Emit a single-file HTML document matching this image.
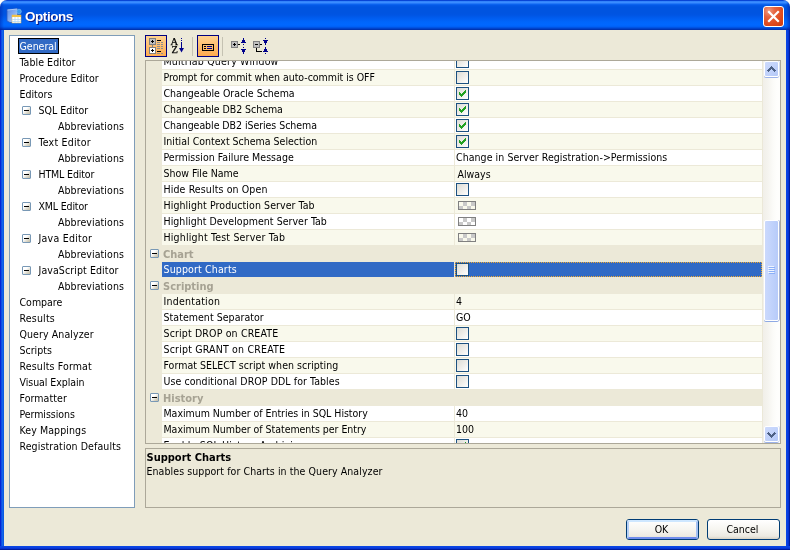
<!DOCTYPE html>
<html>
<head>
<meta charset="utf-8">
<title>Options</title>
<style>
html,body{margin:0;padding:0;background:#fff;}
body{width:790px;height:550px;overflow:hidden;position:relative;
 font-family:"DejaVu Sans Condensed","Liberation Sans",sans-serif;font-size:10.5px;color:#000;}
*{box-sizing:border-box;}
.abs{position:absolute;}
#win{will-change:transform;position:absolute;left:0;top:0;width:790px;height:550px;background:#ece9d8;
 border-radius:7px 7px 0 0;overflow:hidden;}
#title{position:absolute;left:0;top:0;width:790px;height:30px;
 background:linear-gradient(to bottom,#0845d6 0px,#0845d6 1px,#2f7ff8 1px,#3a8cff 2.5px,#2478f8 3.5px,#0a62ee 4.5px,#0358e6 5.5px,#0054e0 7px,#0054e0 13px,#0055e3 15px,#005cef 18px,#0066fb 22px,#0068ff 25px,#0061f6 26.5px,#0054e3 27.5px,#0044cc 28.5px,#0034b0 29.5px,#002e9e 30px);}
#title .shadeL{position:absolute;left:0;top:0;width:4px;height:30px;background:linear-gradient(to right,rgba(0,20,150,.4),rgba(0,20,150,0));}
#title .shadeR{position:absolute;right:0;top:0;width:4px;height:30px;background:linear-gradient(to left,rgba(0,20,150,.5),rgba(0,20,150,0));}
#ttext{position:absolute;left:25px;top:8px;line-height:17px;height:17px;color:#fff;
 font-family:"Liberation Sans",sans-serif;font-weight:bold;font-size:13.5px;letter-spacing:-0.45px;
 text-shadow:1px 1px 0 #0a1883;white-space:nowrap;}
#bl{left:0;top:30px;width:4px;height:520px;background:linear-gradient(to right,#0019cf 0,#0831d9 25%,#166aee 50%,#0855dd 100%);}
#br{left:786px;top:30px;width:4px;height:520px;background:linear-gradient(to right,#0b48e6 0,#0a40e0 1.5px,#0733d2 2.6px,#0020a8 3.2px,#001690 4px);}
#bb{left:0;top:546px;width:790px;height:4px;background:linear-gradient(to bottom,#0b48e6 0,#0a40e0 1.5px,#0733d2 2.6px,#0020a8 3.2px,#001690 4px);}
#close{left:763px;top:6px;width:21px;height:21px;border:1px solid #fff;border-radius:3px;
 background:radial-gradient(circle at 25% 20%,#ef9a80 0%,#e5633f 30%,#e04a1d 65%,#cc3a0e 100%);}
/* tree */
#tree{left:9px;top:35px;width:126px;height:473px;background:#fff;border:1px solid #7f9db9;}
.ti{position:absolute;height:16px;line-height:16px;white-space:nowrap;}
.sel{background:#316ac5;color:#fff;border:1px solid #000;}
.pm{position:absolute;width:9px;height:9px;border:1px solid #7898b5;border-radius:1px;
 background:linear-gradient(135deg,#fff 0%,#fff 35%,#d6d2c2 75%,#c3bca6 100%);}
.pm:after{content:"";position:absolute;left:1px;top:3px;width:5px;height:1px;background:#000;}
/* toolbar */
.tb{width:22px;height:22px;border:1px solid #000080;background:linear-gradient(to bottom,#ffd28e 0%,#ffc377 40%,#feab4f 100%);}
.sep{width:1px;height:19px;background:#c5c2b2;}
/* grid */
#grid{left:145px;top:60px;width:636px;height:384px;border:1px solid #aca899;background:#ece9d8;overflow:hidden;}
.row{position:absolute;left:16px;width:600px;height:16px;}
.row .n{position:absolute;left:0;top:0;width:292px;height:15px;line-height:15px;padding-left:1.5px;white-space:nowrap;overflow:hidden;}
.row .v{position:absolute;left:293px;top:0;width:307px;height:15px;line-height:15px;padding-left:1px;white-space:nowrap;overflow:hidden;}
.row.w .n,.row.w .v{background:#fff;}
.row.c .n,.row.c .v{background:#f9f9ec;}
.row.s .n{background:#316ac5;color:#fff;}
.row.s .v{background:#316ac5;color:#fff;border:1px dotted #f0a830;}
.cat{position:absolute;left:0;width:616px;height:16px;line-height:17px;font-weight:bold;font-size:11px;color:#a6a293;padding-left:17px;}
.cat .pm{left:4px;top:3px;}
.cb{position:absolute;left:1px;top:1px;width:13px;height:13px;border:1px solid #1c5180;
 background:linear-gradient(135deg,#dcdcd7 0%,#ecebe6 45%,#fff 100%);}
.row.s .cb{left:0;top:0;}
.cb svg{position:absolute;left:0;top:0;}
.sw{position:absolute;left:3px;top:3px;width:18px;height:9px;border:1px solid #808080;overflow:hidden;}
/* scrollbar */
#sb{left:616px;top:0;width:18px;height:382px;background:linear-gradient(to right,#ebe8d8 0,#ebe8d8 1px,#f1efe9 1px,#f5f4ef 6px,#fbfbf8 11px,#fefefc 15px,#fefefc 18px);}
.sbtn{position:absolute;left:2px;width:15px;height:16px;border:1px solid #fff;border-radius:2px;
 background:linear-gradient(135deg,#cddafc 0%,#c2d3fb 50%,#b4c8f7 100%);box-shadow:1px 0 0 #d3dcf0,0 1px 0 #9db3ea;}
#thumb{position:absolute;left:2px;top:159px;width:15px;height:101px;border:1px solid #fff;border-radius:2px;
 background:linear-gradient(to right,#cbd9fc 0%,#c3d4fc 40%,#b7cbf9 100%);box-shadow:1px 0 0 #a9b6d6,0 1px 0 #8ea9e4;}
/* description */
#desc{left:145px;top:448px;width:636px;height:60px;border:1px solid #aca899;background:#ece9d8;}
/* buttons */
.btn{width:73px;height:21px;border:1px solid #003c74;border-radius:3px;text-align:center;line-height:19px;padding-right:2px;
 background:linear-gradient(to bottom,#fff 0%,#f6f5f0 50%,#eceae2 85%,#d8d2c4 100%);}
.btn.def:before{content:"";box-sizing:border-box;position:absolute;left:0;top:0;width:71px;height:19px;border-style:solid;border-width:2px;border-color:#cee7ff #a4c1f2 #6f8cec #b6d0f6;border-radius:2px;}
</style>
</head>
<body>
<div id="win">
 <div id="title">
  <div class="shadeL"></div><div class="shadeR"></div>
  <svg class="abs" style="left:6px;top:7px" width="18" height="18" viewBox="0 0 18 18">
   <defs><linearGradient id="ig" x1="0" y1="0" x2="1" y2="1"><stop offset="0" stop-color="#5a8ae6"/><stop offset="0.5" stop-color="#86aef0"/><stop offset="1" stop-color="#c4d8fa"/></linearGradient></defs>
   <path d="M1 2.5 L11.5 1.5 L11.5 15 L4 15.5 L1 14 Z" fill="url(#ig)" stroke="#2a5cc4" stroke-width=".8"/><path d="M1.500 3 L11 2.100" stroke="#a9c8f6" stroke-width="1" fill="none"/>
   <circle cx="13" cy="4.5" r="2.3" fill="#3c9cf0" stroke="#8cc4f8" stroke-width=".6"/>
   <rect x="6" y="8" width="9" height="8" fill="#fff"/>
   <rect x="6" y="8" width="9" height="2" fill="#f3c343"/><rect x="6" y="8" width="9" height="8" fill="none" stroke="#e8b84a" stroke-width=".5"/>
   <path d="M6 12.5 H15 M6 14.5 H15 M9 10 V16 M12 10 V16" stroke="#b5d8f5" stroke-width=".8" fill="none"/>
  </svg>
  <div id="ttext">Options</div>
  <div id="close" class="abs">
   <svg width="19" height="19" viewBox="0 0 19 19" style="position:absolute;left:0;top:0"><path d="M5 5 L14 14 M14 5 L5 14" stroke="#fff" stroke-width="2.2" stroke-linecap="square"/></svg>
  </div>
 </div>
 <div id="bl" class="abs"></div><div id="br" class="abs"></div><div id="bb" class="abs"></div>

 <div id="tree" class="abs">
  <div class="ti sel" style="left:8px;top:2px;width:41px;padding-left:0.5px;line-height:14px">General</div>
  <div class="ti" style="left:9.5px;top:18px;letter-spacing:0.06px">Table Editor</div>
  <div class="ti" style="left:9.5px;top:34px;letter-spacing:0.05px">Procedure Editor</div>
  <div class="ti" style="left:9.5px;top:50px">Editors</div>
  <div class="pm" style="left:12px;top:70px"></div><div class="ti" style="left:28.5px;top:66px">SQL Editor</div>
  <div class="ti" style="left:48px;top:82px;letter-spacing:0.08px">Abbreviations</div>
  <div class="pm" style="left:12px;top:102px"></div><div class="ti" style="left:28.5px;top:98px;letter-spacing:0.23px">Text Editor</div>
  <div class="ti" style="left:48px;top:114px;letter-spacing:0.08px">Abbreviations</div>
  <div class="pm" style="left:12px;top:134px"></div><div class="ti" style="left:28.5px;top:130px;letter-spacing:-0.14px">HTML Editor</div>
  <div class="ti" style="left:48px;top:146px;letter-spacing:0.08px">Abbreviations</div>
  <div class="pm" style="left:12px;top:166px"></div><div class="ti" style="left:28.5px;top:162px;letter-spacing:-0.16px">XML Editor</div>
  <div class="ti" style="left:48px;top:178px;letter-spacing:0.08px">Abbreviations</div>
  <div class="pm" style="left:12px;top:198px"></div><div class="ti" style="left:28.5px;top:194px;letter-spacing:0.25px">Java Editor</div>
  <div class="ti" style="left:48px;top:210px;letter-spacing:0.08px">Abbreviations</div>
  <div class="pm" style="left:12px;top:230px"></div><div class="ti" style="left:28.5px;top:226px;letter-spacing:0.1px">JavaScript Editor</div>
  <div class="ti" style="left:48px;top:242px;letter-spacing:0.08px">Abbreviations</div>
  <div class="ti" style="left:9.5px;top:258px">Compare</div>
  <div class="ti" style="left:9.5px;top:274px;letter-spacing:0.2px">Results</div>
  <div class="ti" style="left:9.5px;top:290px;letter-spacing:0.1px">Query Analyzer</div>
  <div class="ti" style="left:9.5px;top:306px">Scripts</div>
  <div class="ti" style="left:9.5px;top:322px;letter-spacing:0.15px">Results Format</div>
  <div class="ti" style="left:9.5px;top:338px;letter-spacing:-0.05px">Visual Explain</div>
  <div class="ti" style="left:9.5px;top:354px;letter-spacing:0.08px">Formatter</div>
  <div class="ti" style="left:9.5px;top:370px;letter-spacing:-0.05px">Permissions</div>
  <div class="ti" style="left:9.5px;top:386px;letter-spacing:0.1px">Key Mappings</div>
  <div class="ti" style="left:9.5px;top:402px;letter-spacing:0.1px">Registration Defaults</div>
 </div>

 <!-- toolbar -->
 <div class="abs tb" style="left:145px;top:35px">
  <svg width="20" height="20" viewBox="0 0 20 20" style="position:absolute;left:0;top:0" shape-rendering="crispEdges">
   <rect x="3.5" y="2.5" width="6" height="6" fill="#c0c0c0" stroke="#808080"/>
   <rect x="3.5" y="11.5" width="6" height="6" fill="#fff" stroke="#808080"/>
   <path d="M6.5 9 V11" stroke="#808080"/>
   <path d="M5 5.5 H8 M6.5 4 V7 M5 14.5 H8 M6.5 13 V16" stroke="#000"/>
   <path d="M11 4.5 H15 M11 15.5 H15" stroke="#000"/>
   <path d="M11 6.5 H14 M15 6.5 H17 M11 8.5 H14 M15 8.5 H17 M11 10.5 H14 M15 10.5 H17 M11 12.5 H14 M15 12.5 H17 M11 17.5 H14 M15 17.5 H17" stroke="#8e8e8e"/>
  </svg>
 </div>
 <svg class="abs" style="left:168px;top:35px" width="22" height="22" viewBox="0 0 22 22">
  <text x="2.600" y="10" font-family="Liberation Serif,serif" font-size="10.5" fill="#000" stroke="#000" stroke-width="0.25">A</text>
  <text x="3.400" y="18" font-family="Liberation Serif,serif" font-size="10.5" fill="#000" stroke="#000" stroke-width="0.25">Z</text>
  <path d="M13.5 3 V4 M13.5 5 V6 M13.5 7 V14" stroke="#00008b" stroke-width="1" shape-rendering="crispEdges"/>
  <path d="M11 13 H16 L13.5 17.5 Z" fill="#00008b"/>
 </svg>
 <div class="abs sep" style="left:192px;top:37px"></div>
 <div class="abs tb" style="left:197px;top:35px">
  <svg width="20" height="20" viewBox="0 0 20 20" style="position:absolute;left:0;top:0" shape-rendering="crispEdges">
   <rect x="4.5" y="8.5" width="11" height="6" fill="none" stroke="#000"/>
   <path d="M6 10.5 H8 M6 12.5 H8" stroke="#000"/>
   <path d="M9 10.5 H14 M9 12.5 H14" stroke="#00008b"/>
  </svg>
 </div>
 <div class="abs sep" style="left:222px;top:37px"></div>
 <svg class="abs" style="left:228px;top:35px" width="22" height="22" viewBox="0 0 22 22" shape-rendering="crispEdges">
  <rect x="3.5" y="6.5" width="6" height="6" fill="#c0c0c0" stroke="#808080"/>
  <path d="M5 9.5 H8 M6.5 8 V11 M10 9.5 H12" stroke="#000"/>
  <path d="M15 3 h1 v2 h1 v2 h1 v1 h-5 v-1 h1 v-2 h1 Z" fill="#00008b"/>
  <path d="M15 9 h1 v1 h-1 Z M15 12 h1 v1 h-1 Z" fill="#00008b"/>
  <path d="M13 14 h5 v1 h-1 v2 h-1 v2 h-1 v-2 h-1 v-2 h-1 Z" fill="#00008b"/>
 </svg>
 <svg class="abs" style="left:250px;top:35px" width="22" height="22" viewBox="0 0 22 22" shape-rendering="crispEdges">
  <rect x="3.5" y="6.5" width="6" height="6" fill="#c0c0c0" stroke="#808080"/>
  <path d="M5 9.5 H8 M10 9.5 H12" stroke="#000"/>
  <path d="M6.500 13 V16.500 H12" stroke="#000" fill="none"/>
  <path d="M15 3 h1 v1 h-1 Z M15 18 h1 v1 h-1 Z" fill="#00008b"/>
  <path d="M13 5 h5 v1 h-1 v2 h-1 v2 h-1 v-2 h-1 v-2 h-1 Z" fill="#00008b"/>
  <path d="M15 12 h1 v2 h1 v2 h1 v1 h-5 v-1 h1 v-2 h1 Z" fill="#00008b"/>
 </svg>

 <div id="grid" class="abs">
  <div class="row w" style="top:-7px"><div class="n" style="letter-spacing:0.2px">MultiTab Query Window</div><div class="v"><span class="cb"></span></div></div>
  <div class="row c" style="top:9px"><div class="n" style="letter-spacing:-0.025px">Prompt for commit when auto-commit is OFF</div><div class="v"><span class="cb"></span></div></div>
  <div class="row w" style="top:25px"><div class="n">Changeable Oracle Schema</div><div class="v"><span class="cb"><svg width="11" height="11" viewBox="0 0 11 11" shape-rendering="crispEdges"><path d="M2 4h1v3h-1zM3 5h1v3h-1zM4 6h1v3h-1zM5 5h1v3h-1zM6 4h1v3h-1zM7 3h1v3h-1zM8 2h1v3h-1z" fill="#21a121"/></svg></span></div></div>
  <div class="row c" style="top:41px"><div class="n" style="letter-spacing:-0.04px">Changeable DB2 Schema</div><div class="v"><span class="cb"><svg width="11" height="11" viewBox="0 0 11 11" shape-rendering="crispEdges"><path d="M2 4h1v3h-1zM3 5h1v3h-1zM4 6h1v3h-1zM5 5h1v3h-1zM6 4h1v3h-1zM7 3h1v3h-1zM8 2h1v3h-1z" fill="#21a121"/></svg></span></div></div>
  <div class="row w" style="top:57px"><div class="n" style="letter-spacing:-0.05px">Changeable DB2 iSeries Schema</div><div class="v"><span class="cb"><svg width="11" height="11" viewBox="0 0 11 11" shape-rendering="crispEdges"><path d="M2 4h1v3h-1zM3 5h1v3h-1zM4 6h1v3h-1zM5 5h1v3h-1zM6 4h1v3h-1zM7 3h1v3h-1zM8 2h1v3h-1z" fill="#21a121"/></svg></span></div></div>
  <div class="row c" style="top:73px"><div class="n">Initial Context Schema Selection</div><div class="v"><span class="cb"><svg width="11" height="11" viewBox="0 0 11 11" shape-rendering="crispEdges"><path d="M2 4h1v3h-1zM3 5h1v3h-1zM4 6h1v3h-1zM5 5h1v3h-1zM6 4h1v3h-1zM7 3h1v3h-1zM8 2h1v3h-1z" fill="#21a121"/></svg></span></div></div>
  <div class="row w" style="top:89px"><div class="n" style="letter-spacing:0.04px">Permission Failure Message</div><div class="v" style="letter-spacing:0.06px">Change in Server Registration-&gt;Permissions</div></div>
  <div class="row c" style="top:105px"><div class="n">Show File Name</div><div class="v" style="padding-left:2.5px;line-height:17px">Always</div></div>
  <div class="row w" style="top:121px"><div class="n" style="letter-spacing:0.12px">Hide Results on Open</div><div class="v"><span class="cb"></span></div></div>
  <div class="row c" style="top:137px"><div class="n" style="letter-spacing:0.08px">Highlight Production Server Tab</div><div class="v"><span class="sw"><svg width="16" height="8" viewBox="0 0 16 8" shape-rendering="crispEdges" style="display:block"><path d="M4 0h4v4h-4zM12 0h4v4h-4zM0 4h4v4h-4zM8 4h4v4h-4z" fill="#c9c9c9"/></svg></span></div></div>
  <div class="row w" style="top:153px"><div class="n" style="letter-spacing:0.04px">Highlight Development Server Tab</div><div class="v"><span class="sw"><svg width="16" height="8" viewBox="0 0 16 8" shape-rendering="crispEdges" style="display:block"><path d="M4 0h4v4h-4zM12 0h4v4h-4zM0 4h4v4h-4zM8 4h4v4h-4z" fill="#c9c9c9"/></svg></span></div></div>
  <div class="row c" style="top:169px"><div class="n" style="letter-spacing:0.19px">Highlight Test Server Tab</div><div class="v"><span class="sw"><svg width="16" height="8" viewBox="0 0 16 8" shape-rendering="crispEdges" style="display:block"><path d="M4 0h4v4h-4zM12 0h4v4h-4zM0 4h4v4h-4zM8 4h4v4h-4z" fill="#c9c9c9"/></svg></span></div></div>
  <div class="cat" style="top:185px"><span class="pm"></span>Chart</div>
  <div class="row s" style="top:201px"><div class="n" style="letter-spacing:0.15px">Support Charts</div><div class="v"><span class="cb"></span></div></div>
  <div class="cat" style="top:217px"><span class="pm"></span>Scripting</div>
  <div class="row c" style="top:233px"><div class="n" style="letter-spacing:0.23px">Indentation</div><div class="v">4</div></div>
  <div class="row w" style="top:249px"><div class="n" style="letter-spacing:0.05px">Statement Separator</div><div class="v">GO</div></div>
  <div class="row c" style="top:265px"><div class="n" style="letter-spacing:0.15px">Script DROP on CREATE</div><div class="v"><span class="cb"></span></div></div>
  <div class="row w" style="top:281px"><div class="n" style="letter-spacing:0.19px">Script GRANT on CREATE</div><div class="v"><span class="cb"></span></div></div>
  <div class="row c" style="top:297px"><div class="n" style="letter-spacing:0.035px">Format SELECT script when scripting</div><div class="v"><span class="cb"></span></div></div>
  <div class="row w" style="top:313px"><div class="n" style="letter-spacing:0.07px">Use conditional DROP DDL for Tables</div><div class="v"><span class="cb"></span></div></div>
  <div class="cat" style="top:329px"><span class="pm"></span>History</div>
  <div class="row w" style="top:345px"><div class="n" style="letter-spacing:-0.03px">Maximum Number of Entries in SQL History</div><div class="v">40</div></div>
  <div class="row c" style="top:361px"><div class="n" style="letter-spacing:-0.03px">Maximum Number of Statements per Entry</div><div class="v">100</div></div>
  <div class="row w" style="top:377px"><div class="n" style="letter-spacing:0.15px">Enable SQL History Archiving</div><div class="v"><span class="cb"><svg width="11" height="11" viewBox="0 0 11 11" shape-rendering="crispEdges"><path d="M2 4h1v3h-1zM3 5h1v3h-1zM4 6h1v3h-1zM5 5h1v3h-1zM6 4h1v3h-1zM7 3h1v3h-1zM8 2h1v3h-1z" fill="#21a121"/></svg></span></div></div>
  <div id="sb" class="abs">
   <div class="sbtn" style="top:0">
    <svg width="13" height="14" viewBox="0 0 13 14" style="position:absolute;left:0;top:0" shape-rendering="crispEdges"><path d="M6 4h1v1h-1zM5 5h3v1h-3zM4 6h5v1h-5zM3 7h3v1h-3zM7 7h3v1h-3zM2 8h3v1h-3zM8 8h3v1h-3zM3 9h1v1h-1zM9 9h1v1h-1z" fill="#4d6185"/></svg>
   </div>
   <div id="thumb">
    <svg width="13" height="99" viewBox="0 0 13 99" style="position:absolute;left:0;top:0" shape-rendering="crispEdges"><path d="M3 45.5 H9 M3 47.5 H9 M3 49.5 H9 M3 51.5 H9" stroke="#eef4fe"/><path d="M4 46.5 H10 M4 48.5 H10 M4 50.5 H10 M4 52.5 H10" stroke="#8cb0f8"/></svg>
   </div>
   <div class="sbtn" style="top:365px">
    <svg width="13" height="14" viewBox="0 0 13 14" style="position:absolute;left:0;top:0" shape-rendering="crispEdges"><path d="M3 5h1v1h-1zM9 5h1v1h-1zM2 6h3v1h-3zM8 6h3v1h-3zM3 7h3v1h-3zM7 7h3v1h-3zM4 8h5v1h-5zM5 9h3v1h-3zM6 10h1v1h-1z" fill="#4d6185"/></svg>
   </div>
  </div>
 </div>

 <div id="desc" class="abs">
  <div class="abs" style="left:0.5px;top:2px;line-height:13px;font-weight:bold;font-size:11px;white-space:nowrap">Support Charts</div>
  <div class="abs" style="left:0.5px;top:16px;line-height:13px;white-space:nowrap;letter-spacing:0.08px">Enables support for Charts in the Query Analyzer</div>
 </div>

 <div class="abs btn def" style="left:626px;top:519px">OK</div>
 <div class="abs btn" style="left:707px;top:519px">Cancel</div>
</div>
</body>
</html>
